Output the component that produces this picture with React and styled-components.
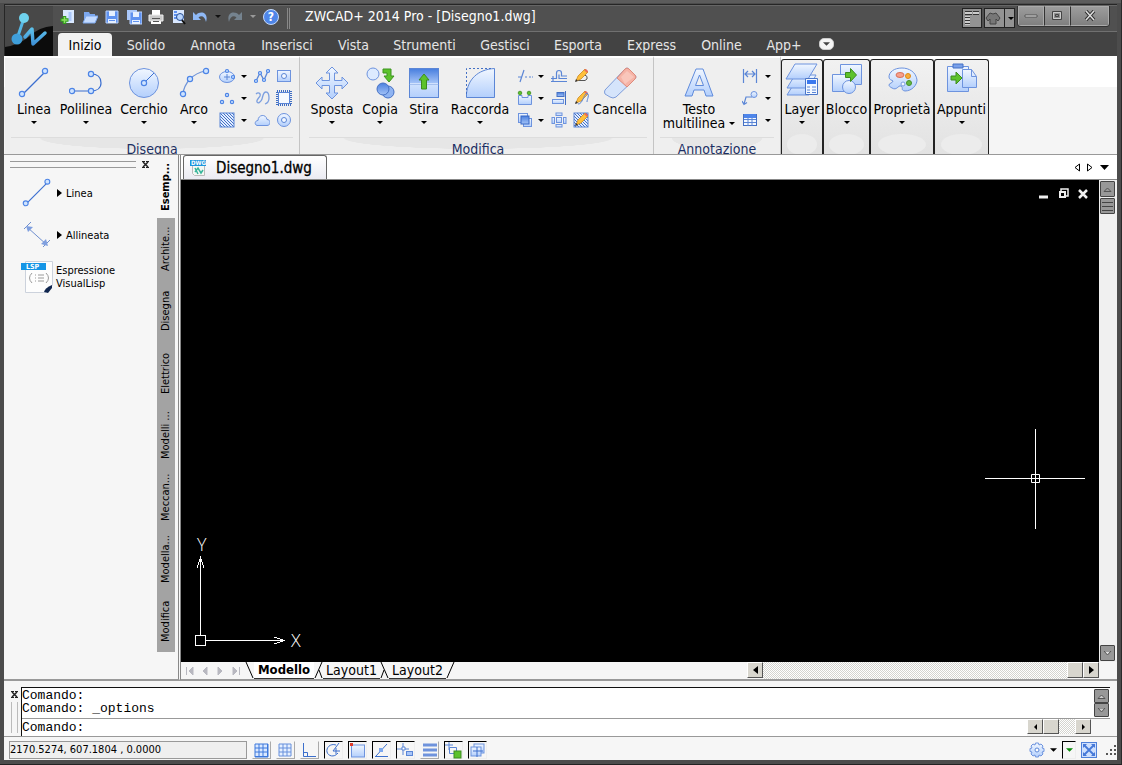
import React from "react";
import styled, { createGlobalStyle, css } from "styled-components";

const GlobalStyle = createGlobalStyle`
  * { box-sizing: border-box; }
  body {
    margin: 0;
    background: #3a3a3a;
    color: #000;
    font-family: "DejaVu Sans Condensed", "Noto Sans", sans-serif;
    font-size: 14px;
  }
  button, input, textarea {
    font-family: inherit;
    color: inherit;
    margin: 0;
    padding: 0;
    border: 0;
    border-radius: 0;
    background: none;
    outline: none;
  }
  svg { display: block; flex: none; }
`;

const BLUE = "#5b86d6";
const glass = { fill: "url(#glass)", stroke: "#6d93de" };

function Node({ x, y, r = 2.6 }) {
  return <circle cx={x} cy={y} r={r} fill="#cfe4ff" stroke="#4c84e6" strokeWidth="1.2" />;
}

function Svg({ w = 16, h, vb, children, ...rest }) {
  return (
    <svg width={w} height={h || w} viewBox={vb || `0 0 ${w} ${h || w}`} fill="none" aria-hidden="true" {...rest}>
      {children}
    </svg>
  );
}

function Caret({ color = "#000", w = 6 }) {
  return (
    <Svg w={w} h={w > 6 ? 4 : 3} vb="0 0 6 3">
      <path d="M0 0h6L3 3z" fill={color} />
    </Svg>
  );
}

/* ---------- large ribbon icons, 34 x 34 ---------- */

const bigIcons = {
  linea: (
    <>
      <path d="M5 29 28 6" stroke="#3b6fd0" strokeWidth="1.2" />
      <Node x={28} y={5} />
      <Node x={5} y={28} />
    </>
  ),
  polilinea: (
    <>
      <path d="M3 25h19M22 8c7 0 10 4 10 9s-4 8-10 8" stroke="#3b6fd0" strokeWidth="1.2" />
      <Node x={22} y={8} />
      <Node x={3} y={25} />
      <Node x={22} y={25} />
    </>
  ),
  cerchio: (
    <>
      <circle cx="17" cy="17" r="14.5" {...glass} />
      <path d="M17 17 27 7" stroke="#3b6fd0" />
      <Node x={17} y={17} />
    </>
  ),
  arco: (
    <>
      <path d="M6 28C7 18 15 7 29 5" stroke="#6e93d8" strokeWidth="1.2" />
      <Node x={29} y={5} />
      <Node x={13} y={13} />
      <Node x={6} y={28} />
    </>
  ),
  sposta: (
    <path
      d="M17 1l6 6h-3.500v7.500H27V11l6 6-6 6v-3.500h-7.500V27H23l-6 6-6-6h3.500v-7.500H7V23l-6-6 6-6v3.500h7.500V7H11z"
      {...glass}
    />
  ),
  copia: (
    <>
      <circle cx="10" cy="8" r="6" {...glass} fill="#dceaff" />
      <path d="M20 3h8v7h3l-5 6-5-6h3V7h-4z" fill="#5cc22c" stroke="#3d9420" />
      <circle cx="25" cy="26" r="6" fill="#8fb4f2" stroke="#4470c4" />
      <circle cx="20" cy="23" r="6" fill="url(#deep)" stroke="#4470c4" />
    </>
  ),
  stira: (
    <>
      <rect x="2.500" y="2.500" width="29" height="29" fill="url(#glass)" stroke="#5b86d6" />
      <rect x="3" y="3" width="28" height="14" fill="url(#deep)" />
      <path d="M2.500 18.500h29" stroke="#7da0e0" strokeDasharray="1 1" />
      <path d="M17 8l5 6h-2.500v9h-5v-9H12z" fill="#5cc22c" stroke="#3d8c20" />
    </>
  ),
  raccorda: (
    <>
      <path d="M3.500 31.500V30C4 15 15 3 31.500 2.500v29z" fill="url(#glass)" />
      <path d="M3.500 31.500v-4C5 14 14 3.500 31.500 2.500v29z" stroke="#5b86d6" />
      <path d="M3.500 28V2.500H28" stroke="#4470c4" strokeDasharray="2 2" />
    </>
  ),
  cancella: (
    <>
      <path d="M2 24 22 3q2-2 4 0l6 6q2 2 0 4L13 31q-3 2-6 0l-5-3q-1-2 0-4z" fill="#d5e4fb" stroke="#7f9edb" />
      <path d="M14 12 22 3q2-2 4 0l6 6q2 2 0 4l-8 8z" fill="#f6b3a6" stroke="#dd8b7c" />
      <path d="M18 11l6-6 7 6-9 7z" fill="#fbcec5" opacity=".7" />
    </>
  ),
  testo: (
    <path
      d="M14 3h7l10 27h-7l-2-6H12l-2 6H3zM17.500 9 13.500 19.500h8z"
      fill="url(#glass)"
      stroke="#5f8bdc"
      fillRule="evenodd"
    />
  ),
  layer: (
    <>
      <path d="M10 19 2 32h22l7-13z" {...glass} />
      <path d="M10 12 2 25h22l7-13z" {...glass} />
      <path d="M10 1 1 16h22l9-15z" {...glass} />
      <path d="M20.500 15.500h12v16h-12z" fill="#f3f8ff" stroke="#4b76c8" />
      <path d="M22 17h9v4h-9z" fill="#3a78ee" />
      <path d="M22 24h3M27 24h4M22 27h3M27 27h4M22 29.500h3M27 29.500h4" stroke="#5b86d6" />
    </>
  ),
  blocco: (
    <>
      <path d="M10.500 1.500h21v20h-21z" {...glass} />
      <path d="M2.500 11.500h18v17h-18z" {...glass} />
      <circle cx="19" cy="24" r="6.500" {...glass} />
      <path d="M15.500 9.500h5v-4l6 6.500-6 6.500v-4h-5z" fill="#5cc22c" stroke="#3d8c20" />
    </>
  ),
  proprieta: (
    <>
      <path d="M7 25c5 3 6-3 9-2 3 2-1 4 4 5 7 0 12-6 12-11C31 9 24 5 17 5 9 5 4 9 4 14c0 3 3 3 4 4 0 2-4 2-4 4 0 1 1 2 3 3z" {...glass} />
      <ellipse cx="15" cy="12" rx="4" ry="2.500" fill="#f7a08c" stroke="#d97058" />
      <circle cx="23" cy="13" r="2.500" fill="#f8ad3a" stroke="#dd8a18" />
      <circle cx="24" cy="20" r="2.500" fill="#66b840" stroke="#43902a" />
      <circle cx="18" cy="21" r="2" fill="#f3f8ff" stroke="#7c9ee0" />
    </>
  ),
  appunti: (
    <>
      <path d="M2.500 3.500h21v25h-21z" {...glass} />
      <path d="M8 1h10v4H8z" fill="#79a0ea" stroke="#4470c4" />
      <path d="M17.500 6.500h9l5 7v11h-14z" {...glass} />
      <path d="M26.500 6.500v7h5" stroke="#6d93de" />
      <path d="M6 13h5V9l6 6-6 6v-4H6z" fill="#5cc22c" stroke="#3d8c20" />
    </>
  ),
};

/* ---------- small ribbon icons, 16 x 16 ---------- */

const pencil = (
  <>
    <path d="M3 13 5 8l7-7 3 3-7 7z" fill="#ffbf3a" stroke="#c98a24" strokeWidth=".8" />
    <path d="M11 2l2-1 2 2-1 2z" fill="#ea6a5c" />
    <path d="M2 14l1-3 2 2z" fill="#333" />
  </>
);

const smallIcons = {
  ellisse: (
    <>
      <ellipse cx="8" cy="9" rx="7.500" ry="5.500" {...glass} />
      <path d="M8 6v6M5 9h6" stroke={BLUE} />
      <Node x={8} y={3} r={1.500} />
      <Node x={14} y={9} r={1.500} />
    </>
  ),
  punti: (
    <>
      <Node x={8} y={5} r={1.600} />
      <Node x={3} y={12} r={1.600} />
      <Node x={13} y={12} r={1.600} />
    </>
  ),
  tratteggio: <rect x="1" y="1" width="14" height="14" fill="url(#hatch)" stroke={BLUE} />,
  spline: (
    <>
      <path d="M2 13 6 5l4 7 4-9" stroke={BLUE} strokeWidth="1.300" />
      <Node x={2} y={13} r={1.500} />
      <Node x={6} y={5} r={1.500} />
      <Node x={10} y={12} r={1.500} />
      <Node x={14} y={3} r={1.500} />
    </>
  ),
  mano: <path d="M2 4c2-2 5-1 4 2-1 2-4 4-3 6s4 0 5-3 1-7 4-7 3 3 3 6-1 5-4 6" stroke="#7c9fdf" strokeWidth="1.300" />,
  nuvola: <path d="M3 13.500c-3-1-2-5 1-5 0-6 8-7 9-1 4 0 4 6 0 6z" {...glass} />,
  regione: (
    <>
      <rect x="1.500" y="2.500" width="13" height="11" {...glass} />
      <circle cx="8" cy="8" r="2.500" fill="#f3f8ff" stroke={BLUE} />
    </>
  ),
  nascondi: (
    <>
      <rect x="1" y="1" width="14" height="14" stroke="#3f6dc2" strokeWidth="2" strokeDasharray="1 1" />
      <rect x="2.500" y="2.500" width="11" height="11" fill="#f6faff" stroke={BLUE} />
    </>
  ),
  anello: (
    <>
      <circle cx="8" cy="8" r="6.500" {...glass} />
      <circle cx="8" cy="8" r="2.500" fill="#f3f8ff" stroke={BLUE} />
    </>
  ),
  taglia: <path d="M1 9h4M3 14 7 2M8 9h2M12 9h2M15 9h1" stroke={BLUE} strokeWidth="1.200" />,
  unisci: (
    <>
      <path d="M1.500 5.500H5v2h6v-2h3.500v9h-13z" {...glass} />
      <circle cx="3" cy="3" r="1.800" fill="#5cc22c" stroke="#3d8c20" strokeWidth=".8" />
      <circle cx="12" cy="3" r="1.800" fill="#5cc22c" stroke="#3d8c20" strokeWidth=".8" />
    </>
  ),
  ordine: (
    <>
      <rect x="1.500" y="1.500" width="9" height="9" {...glass} />
      <rect x="6.500" y="6.500" width="8" height="8" {...glass} />
      <rect x="4" y="4" width="8" height="8" fill="url(#deep)" stroke="#3767c4" />
    </>
  ),
  offset: (
    <path
      d="M0 13.500h16M0 10.500h5.500V5q0-2.500 2.500-2.500T10.500 5v3H16M2 13V8M8 11V6.500M8 10.500h8"
      stroke={BLUE}
      strokeWidth="1.200"
    />
  ),
  allinea: (
    <>
      <path d="M14.500 1v14" stroke="#4470c4" />
      <rect x="6" y="2.500" width="7" height="4" fill="url(#deep)" stroke="#4470c4" />
      <rect x="1.500" y="9.500" width="11" height="4" {...glass} />
    </>
  ),
  serie: (
    <>
      <rect x="5.500" y="5.500" width="5" height="5" {...glass} />
      <rect x="1" y="5.500" width="2.500" height="6" {...glass} />
      <rect x="12.500" y="5.500" width="2.500" height="6" {...glass} />
      <rect x="5" y="1" width="6" height="2.500" {...glass} />
      <rect x="5" y="12.500" width="6" height="2.500" {...glass} />
    </>
  ),
  editPoli: (
    <>
      <path d="M5 12.500h7q3-1 2-4l-3-2" stroke="#555" />
      {pencil}
    </>
  ),
  editSpline: (
    <>
      {pencil}
      <path d="M5 14c5 0 5-9 9-11 3 2 0 6 0 9" stroke={BLUE} />
    </>
  ),
  editTratt: (
    <>
      <rect x="1" y="1" width="14" height="14" fill="url(#hatch)" stroke={BLUE} />
      {pencil}
    </>
  ),
  quota: <path d="M1.500 1v14M14.500 1v14M3 6h10M6 3 3 6l3 3M10 3l3 3-3 3" stroke={BLUE} strokeWidth="1.200" />,
  direttrice: (
    <>
      <path d="M2 14 4 7h6M0 11l2 3.500 3-2" stroke={BLUE} strokeWidth="1.200" />
      <circle cx="12" cy="4.500" r="3" {...glass} />
    </>
  ),
  tabella: (
    <>
      <rect x="1.500" y="2.500" width="13" height="11" fill="#f3f8ff" stroke="#4470c4" />
      <rect x="2" y="2" width="12" height="4" fill="#4f86ea" />
      <path d="M2 7.500h12M2 10.500h12M6 6v8M10 6v8" stroke={BLUE} />
    </>
  ),
};

/* ---------- quick access icons ---------- */

const disk = (
  <>
    <path d="M2 2h12v12H2z" fill="#5f92f0" stroke="#b8d0fa" />
    <path d="M5 2h6v5H5zM4 10h8v4H4z" fill="#e6f0ff" />
    <path d="M5 11.500h6" stroke="#5f92f0" />
  </>
);

const quickIcons = {
  Nuovo: (
    <>
      <path d="M3 1h11v13H3z" fill="#d9e8ff" />
      <path d="M10 3v9" stroke="#a9c6f8" strokeWidth="3" />
      <path d="M4.500 7v8M.5 11h8" stroke="#2f9a1c" strokeWidth="3.500" />
      <path d="M4.500 8v6M1.500 11h6" stroke="#8de060" strokeWidth="1.500" />
    </>
  ),
  Apri: (
    <>
      <path d="M2 14V3h5l1 2h5v9z" fill="#7ca8ef" />
      <path d="M1 14 4 7h12l-3 7z" fill="#c4dbff" stroke="#7ca8ef" />
    </>
  ),
  Salva: disk,
  "Salva con nome": (
    <>
      <path d="M1 1h10v10H1z" fill="#a9c8fb" />
      <g transform="translate(2 1)">{disk}</g>
    </>
  ),
  Stampa: (
    <>
      <path d="M4 1h8v5H4zM3 10h10v5H3z" fill="#fff" />
      <path d="M1 6h14v6H1z" fill="#c9c9c9" stroke="#eee" />
      <path d="M4 9.500h8M5 12.500h6" stroke="#555" />
    </>
  ),
  Anteprima: (
    <>
      <path d="M3 1h11v13H3z" fill="#d9e8ff" />
      <path d="M4 3h3M4 6h3M4 9h3" stroke="#5f92f0" strokeWidth="2" />
      <circle cx="10" cy="8" r="3.500" fill="#b9d6ff" stroke="#264c91" />
      <path d="m12 11 3 4" stroke="#111" strokeWidth="2" />
    </>
  ),
};

const quickOrder = ["Nuovo", "Apri", "Salva", "Salva con nome", "Stampa", "Anteprima"];

function Undo({ color, flip }) {
  return (
    <Svg w={16}>
      <path
        d="M1 3v8h8L6.500 8.500C9 6 13 7 14 13 17 4 9 1 4 6z"
        fill={color}
        transform={flip ? "matrix(-1 0 0 1 16 0)" : undefined}
      />
    </Svg>
  );
}

/* ---------- data ---------- */

const menuTabs = [
  ["Inizio", 54], ["Solido", 64], ["Annota", 70], ["Inserisci", 78], ["Vista", 55], ["Strumenti", 87],
  ["Gestisci", 74], ["Esporta", 72], ["Express", 75], ["Online", 65], ["App+", 60],
];

const paletteTabs = ["Archite...", "Disegna", "Elettrico", "Modelli ...", "Meccan...", "Modella...", "Modifica"];

const collapsed = [
  ["Layer", "layer", 42], ["Blocco", "blocco", 47], ["Proprietà", "proprieta", 64], ["Appunti", "appunti", 55],
];

const statusIcons = [
  ["Snap", false, <path key="a" d="M2 2h13v13H2zM2 6h13M2 10h13M6 2v13M10 2v13M14.500 2v13M2 14.500h13" stroke="#3c78dc" fill="#dbe9ff" />],
  ["Griglia", false, <path key="b" d="M2 2h12v12H2zM2 6h12M2 10h12M6 2v12M10 2v12" stroke="#6690dc" fill="#e6f0ff" />],
  ["Orto", false, <path key="c" d="M2.500 1v13.500H15M2.500 10.500h4v4" stroke="#3c6fcc" />],
  ["Polare", true, <path key="d" d="M8 9h7M8 9l6-8M11 3C5 1 1 6 2 10s7 6 11 1M11 6v6" stroke="#3c6fcc" />],
  ["Osnap", true, <g key="e"><rect x="2.500" y="3" width="13" height="12" {...glass} /><path d="M1 1h3v3H1z" fill="#e03c2c" /></g>],
  ["Otrack", true, <g key="f"><path d="M2 14.500h13M3 14 14 2" stroke="#3c6fcc" /><path d="M6 6h4v4H6z" fill="#7ca8ef" /></g>],
  ["Dinamico", true, <g key="g"><path d="M6 1v12M0 7h12" stroke="#5b86d6" /><path d="M5 5h3v3H5z" fill="#fff" stroke={BLUE} /><rect x="9.500" y="9.500" width="6" height="4" fill="#a9c6f8" stroke={BLUE} /></g>],
  ["Spessore", false, <path key="h" d="M2 3h14M2 8h14M2 13h14" stroke="#6f93dc" strokeWidth="3" />],
  ["Ciclo", true, <g key="i"><path d="M4 0v8M0 3h8M4.500 5.500h7v6h-7z" stroke={BLUE} /><rect x="9" y="9" width="7" height="7" fill="#5cc22c" stroke="#3d8c20" /></g>],
  ["Modello", true, <g key="j"><rect x="5" y="2" width="10" height="9" {...glass} /><rect x="2" y="5" width="10" height="9" {...glass} /><path d="M4 9h10M8 5v10" stroke="#3c6fcc" /></g>],
];

/* ---------- app ---------- */

function BigButton({ icon, label, w, caret = true }) {
  return (
    <Big $w={w}>
      <Svg w={34}>{bigIcons[icon]}</Svg>
      <span>{label}</span>
      {caret && <Caret />}
    </Big>
  );
}

function SmallTools({ columns, items }) {
  return (
    <SmallGrid $columns={columns}>
      {items.map((item, i) => (
        <button key={i} type="button" aria-label={item === "v" ? "Altro" : item}>
          {item === "v" ? <Caret /> : <Svg w={16}>{smallIcons[item]}</Svg>}
        </button>
      ))}
    </SmallGrid>
  );
}

function App() {
  return (
    <Frame>
      <GlobalStyle />
      <Header>
        <Logo type="button" aria-label="Menu applicazione">
          <Svg w={48} h={49}>
            <defs>
              <linearGradient id="glass" x1="0" y1="0" x2="0" y2="1">
                <stop offset="0" stopColor="#f1f7ff" />
                <stop offset="1" stopColor="#b3cffc" />
              </linearGradient>
              <linearGradient id="deep" x1="0" y1="0" x2="0" y2="1">
                <stop offset="0" stopColor="#4a80df" />
                <stop offset="1" stopColor="#a4c3f7" />
              </linearGradient>
              <linearGradient id="logo" x1="0" y1="0" x2="0" y2="1">
                <stop offset="0" stopColor="#5cc0ea" />
                <stop offset="1" stopColor="#3f92d8" />
              </linearGradient>
              <pattern id="hatch" width="3" height="3" patternUnits="userSpaceOnUse">
                <rect width="3" height="3" fill="#e2edff" />
                <path d="M0 0l3 3" stroke="#4470c4" />
              </pattern>
            </defs>
            <path d="M0 0h48v19Q34 20 25 29 14 38 0 40z" fill="#484848" />
            <path d="M48 19Q34 20 25 29 14 38 0 40v9h48z" fill="#0c0c0c" />
            <path d="M19 11 12 32" stroke="#55b6e4" strokeWidth="3" />
            <circle cx="19" cy="11" r="5" fill="#6fd2ee" />
            <circle cx="12" cy="32" r="5.500" fill="#3f9fdb" />
            <path d="M20 30 27 22 28 37 40 26" stroke="url(#logo)" strokeWidth="3.500" strokeLinecap="round" strokeLinejoin="round" />
          </Svg>
        </Logo>
        <HeaderRows>
          <TitleBar>
            <QuickAccess>
              {quickOrder.map((name) => (
                <button key={name} type="button" aria-label={name}>
                  <Svg w={16}>{quickIcons[name]}</Svg>
                </button>
              ))}
              <button type="button" aria-label="Annulla"><Undo color="#8fb9f6" /></button>
              <SlimButton type="button" aria-label="Elenco annulla"><Caret color="#111" /></SlimButton>
              <button type="button" aria-label="Ripeti"><Undo color="#75838f" flip /></button>
              <SlimButton type="button" aria-label="Elenco ripeti"><Caret color="#999" /></SlimButton>
              <HelpButton type="button">?</HelpButton>
            </QuickAccess>
            <Title>ZWCAD+ 2014 Pro - [Disegno1.dwg]</Title>
            <StyleButton type="button" aria-label="Interfaccia" $w={20}>
              <Svg w={16}>
                <path d="M1 1.500h7v3H1zM9 1.500h6v3H9zM1 6h5v9H1z" fill="#ccc" />
                <path d="M1 1.500h7M9 1.500h6M1 4.500h7M9 4.500h6M1 7.500h5M1 10.500h5M1 13.500h5" stroke="#333" />
              </Svg>
            </StyleButton>
            <StyleButton type="button" aria-label="Stile" $w={31}>
              <Svg w={16}>
                <path d="M5 3q3 2 6 0l4 5-2 3-2-2v5H5V9l-2 2-2-3z" fill="#777" stroke="#444" />
              </Svg>
              <i />
              <Caret />
            </StyleButton>
            <WindowButtons>
              <WinButton type="button" aria-label="Riduci" $w={26}>
                <Svg w={14}><path d="M1 6h12v2H1z" fill="#ddd" stroke="#444" strokeWidth=".8" /></Svg>
              </WinButton>
              <WinButton type="button" aria-label="Ingrandisci" $w={26}>
                <Svg w={12}><path d="M1.500 1.500h9v8h-9zM4.500 4.500h3v2h-3z" stroke="#444" /><path d="M2.500 2.500h7v6h-7z" stroke="#ccc" /></Svg>
              </WinButton>
              <WinButton type="button" aria-label="Chiudi" $w={39}>
                <Svg w={12}><path d="m2 1 8 9M10 1l-8 9" stroke="#333" strokeWidth="3.500" /><path d="m2 1 8 9M10 1l-8 9" stroke="#ddd" strokeWidth="1.500" /></Svg>
              </WinButton>
            </WindowButtons>
          </TitleBar>
          <MenuBar>
            {menuTabs.map(([name, w], i) => (
              <MenuTab key={name} type="button" $w={w} $active={i === 0}>{name}</MenuTab>
            ))}
            <Collapse type="button" aria-label="Riduci barra"><Caret color="#444" w={7} /></Collapse>
          </MenuBar>
        </HeaderRows>
      </Header>

      <Ribbon>
        <Group>
          <Tools>
            <BigButton icon="linea" label="Linea" w={46} />
            <BigButton icon="polilinea" label="Polilinea" w={58} />
            <BigButton icon="cerchio" label="Cerchio" w={58} />
            <BigButton icon="arco" label="Arco" w={42} />
            <SmallTools
              columns="24px 10px 26px 18px"
              items={["ellisse", "v", "spline", "regione", "punti", "v", "mano", "nascondi", "tratteggio", "v", "nuvola", "anello"]}
            />
          </Tools>
          <GroupLabel>Disegna</GroupLabel>
        </Group>
        <Group $wide>
          <Tools>
            <BigButton icon="sposta" label="Sposta" w={46} />
            <BigButton icon="copia" label="Copia" w={50} />
            <BigButton icon="stira" label="Stira" w={38} />
            <BigButton icon="raccorda" label="Raccorda" w={74} />
            <SmallTools
              columns="16px 16px 20px 24px"
              items={["taglia", "v", "offset", "editPoli", "unisci", "v", "allinea", "editSpline", "ordine", "v", "serie", "editTratt"]}
            />
            <BigButton icon="cancella" label="Cancella" w={54} caret={false} />
          </Tools>
          <GroupLabel>Modifica</GroupLabel>
        </Group>
        <Group>
          <Tools>
            <Big $w={78}>
              <Svg w={34}>{bigIcons.testo}</Svg>
              <span>Testo</span>
              <TextLine>multilinea <Caret /></TextLine>
            </Big>
            <SmallTools columns="24px 12px" items={["quota", "v", "direttrice", "v", "tabella", "v"]} />
          </Tools>
          <GroupLabel>Annotazione</GroupLabel>
        </Group>
        {collapsed.map(([label, icon, w]) => (
          <Folded key={label} type="button" $w={w}>
            <Svg w={34}>{bigIcons[icon]}</Svg>
            <span>{label}</span>
            <Caret />
            <i />
          </Folded>
        ))}
      </Ribbon>

      <Workspace>
        <Palette>
          <PaletteBody>
            <Grip><i /><button type="button" aria-label="Chiudi tavolozza"><CrossIcon /></button></Grip>
            <Tool type="button">
              <Svg w={32} vb="0 0 34 34">{bigIcons.linea}</Svg>
              <Svg w={5} h={8}><path d="M0 0v8l5-4z" fill="#000" /></Svg>
              Linea
            </Tool>
            <Tool type="button">
              <Svg w={32}>
                <path d="M6 8 26 26M3 10 10 3M22 28l7-7" stroke="#6f8fcf" />
                <path d="m5 7 7 1-5 5zM27 27l-2-7-5 5z" fill="#7f9fdf" />
              </Svg>
              <Svg w={5} h={8}><path d="M0 0v8l5-4z" fill="#000" /></Svg>
              Allineata
            </Tool>
            <Tool type="button" $tight>
              <Svg w={32}>
                <path d="M4.500.5h27v24l-7 7h-20z" fill="#fdfdfd" stroke="#ccd2dc" />
                <path d="M0 2h25v7H0z" fill="#1595e6" />
                <text x="5" y="8" fontSize="7" fontWeight="bold" fill="#fff">LSP</text>
                <path d="M11 12q-5 5 0 10M25 12q5 5 0 10M14 14h1M14 17h1M14 20h1M17 14h6M17 17h6M17 20h6" stroke="#9a9a9a" />
                <path d="M23 31q1-4 8-7v3l-4 5z" fill="#10264f" />
              </Svg>
              <span>Espressione<br />VisualLisp</span>
            </Tool>
          </PaletteBody>
          <SideTabs>
            <SideTab type="button" $active>Esemp...</SideTab>
            {paletteTabs.map((t) => <SideTab key={t} type="button">{t}</SideTab>)}
          </SideTabs>
        </Palette>

        <Document>
          <DocTabs>
            <DocTab type="button">
              <Svg w={16}>
                <path d="M2.500 3.500h12v12h-10l-2-2z" fill="#f4f8f4" stroke="#bbb" />
                <path d="M0 0h16v6H0z" fill="#1c95dd" />
                <text x="1" y="5" fontSize="6" fontWeight="bold" fill="#fff">DWG</text>
                <path d="m5 12 3-4 3 5 2-3M5 8l3 6" stroke="#37b59b" strokeWidth="1.500" />
              </Svg>
              Disegno1.dwg
            </DocTab>
            <TabNav>
              <button type="button" aria-label="Precedente"><Svg w={6} h={9}><path d="M5.500 1v7L1 4.500z" stroke="#000" /></Svg></button>
              <button type="button" aria-label="Successivo"><Svg w={6} h={9}><path d="M.5 1v7L5 4.500z" stroke="#000" /></Svg></button>
              <button type="button" aria-label="Elenco disegni"><Svg w={9} h={5}><path d="M0 0h9L4.500 5z" fill="#000" /></Svg></button>
            </TabNav>
          </DocTabs>
          <ViewRow>
            <View>
              <ViewControls>
                <button type="button" aria-label="Riduci disegno"><Svg w={11}><path d="M1 9h9" stroke="#eee" strokeWidth="3" /></Svg></button>
                <button type="button" aria-label="Ripristina disegno"><Svg w={11}><path d="M3 3V1h7v7H8" stroke="#eee" strokeWidth="1.500" /><path d="M2 4h5v5H2z" stroke="#eee" strokeWidth="2" /></Svg></button>
                <button type="button" aria-label="Chiudi disegno"><Svg w={11}><path d="m1 2 8 8M9 2l-8 8" stroke="#eee" strokeWidth="2.500" /></Svg></button>
              </ViewControls>
              <Ucs w={124} h={126} vb="0 -10 124 126" shapeRendering="crispEdges">
                <path d="M3.500 99.500h10v10h-10zM8.500 99V23M14 104.500h78" stroke="#fff" />
                <path d="M5 32l3.500-10L12 32M82 101l10 3.500-10 3.500" stroke="#fff" />
                <text x="5" y="15">Y</text>
                <text x="99" y="111">X</text>
              </Ucs>
              <Cross w={100} h={100}>
                <path d="M50.500 0v100M0 49.500h100M46.500 45.500h8v8h-8z" stroke="#fff" />
              </Cross>
            </View>
            <VScroll>
              <MiniButton type="button" aria-label="Su"><Svg w={9} h={5}><path d="M1 4.500h7L4.500 1z" fill="#999" stroke="#555" /></Svg></MiniButton>
              <MiniButton type="button" aria-label="Cursore verticale"><Svg w={11} h={10}><path d="M0 1.500h11M0 5.500h11M0 9.500h11" stroke="#444" /></Svg></MiniButton>
              <s />
              <MiniButton type="button" aria-label="Giù"><Svg w={9} h={5}><path d="M1 0h7L4.500 4z" fill="#ddd" stroke="#555" /></Svg></MiniButton>
            </VScroll>
          </ViewRow>
          <LayoutBar>
            <Steps>
              {["M1.500 1v8M8 1v8L4 5z", "M7 1v8L3 5z", "M2 1v8l4-4z", "M2 1v8l4-4zM8.500 1v8"].map((d) => (
                <button key={d} type="button" aria-label="Scorri layout"><Svg w={10}><path d={d} fill="#b8b8c0" stroke="#b8b8c0" /></Svg></button>
              ))}
            </Steps>
            <Slash $back />
            <LayoutTab type="button" $active>Modello</LayoutTab>
            <Slash $both />
            <LayoutTab type="button">Layout1</LayoutTab>
            <Slash $both $cross />
            <LayoutTab type="button">Layout2</LayoutTab>
            <Slash />
            <HScroll>
              <ClassicButton type="button" aria-label="Sinistra"><Svg w={5} h={8}><path d="M5 0v8L0 4z" fill="#000" /></Svg></ClassicButton>
              <s />
              <ClassicButton type="button" aria-label="Cursore orizzontale" />
              <ClassicButton type="button" aria-label="Destra"><Svg w={5} h={8}><path d="M0 0v8l5-4z" fill="#000" /></Svg></ClassicButton>
            </HScroll>
          </LayoutBar>
        </Document>
      </Workspace>

      <CommandDock>
        <DockGrip><button type="button" aria-label="Chiudi comandi"><CrossIcon /></button><i /></DockGrip>
        <CommandPane>
          <History>
            <div>Comando:<br />Comando: _options</div>
            <MiniPair>
              <MiniButton type="button" aria-label="Su"><Svg w={9} h={5}><path d="M1 4.500h7L4.500 1z" fill="#ccc" stroke="#555" /></Svg></MiniButton>
              <MiniButton type="button" aria-label="Giù"><Svg w={9} h={5}><path d="M1 0h7L4.500 4z" fill="#ccc" stroke="#555" /></Svg></MiniButton>
            </MiniPair>
          </History>
          <Prompt>
            <label htmlFor="cmd">Comando:</label>
            <input id="cmd" type="text" />
            <PromptScroll>
              <ClassicButton type="button" aria-label="Sinistra"><Svg w={3} h={6}><path d="M3 0v6L0 3z" fill="#000" /></Svg></ClassicButton>
              <ClassicButton type="button" aria-label="Cursore comandi" />
              <s />
              <ClassicButton type="button" aria-label="Destra"><Svg w={3} h={6}><path d="M0 0v6l3-3z" fill="#000" /></Svg></ClassicButton>
            </PromptScroll>
          </Prompt>
        </CommandPane>
      </CommandDock>

      <StatusBar>
        <Coords>2170.5274, 607.1804 , 0.0000</Coords>
        {statusIcons.map(([name, on, icon]) => (
          <Toggle key={name} type="button" aria-label={name} aria-pressed={on} $on={on}>
            <Svg w={17}>{icon}</Svg>
          </Toggle>
        ))}
        <StatusRight>
          <button type="button" aria-label="Impostazioni">
            <Svg w={16}>
              <path d="M6.500 1h3l.5 2 2-1 2 2-1 2 2 .5v3l-2 .5 1 2-2 2-2-1-.5 2h-3L6 13l-2 1-2-2 1-2-2-.5v-3L3 6 2 4l2-2 2 1z" {...glass} />
              <circle cx="8" cy="8" r="2" fill="#fff" stroke={BLUE} />
            </Svg>
          </button>
          <button type="button" aria-label="Elenco impostazioni"><Caret w={7} /></button>
          <Toggle type="button" aria-label="Menu stato" $on $slim><Caret color="#0a8a0a" w={7} /></Toggle>
          <button type="button" aria-label="Schermo intero">
            <Svg w={16}>
              <rect x=".5" y=".5" width="15" height="15" fill="#cfe0fd" stroke="#4f80d8" />
              <path d="m3 3 10 10M13 3 3 13" stroke="#4679d8" strokeWidth="1.800" />
              <path d="M2 2h4L2 6zM14 2h-4l4 4zM2 14h4l-4-4zM14 14h-4l4-4z" fill="#4679d8" />
            </Svg>
          </button>
          <Svg w={11}>
            <path d="M8 0h2v2H8zM8 4h2v2H8zM4 4h2v2H4zM8 8h2v2H8zM4 8h2v2H4zM0 8h2v2H0z" fill="#555" />
          </Svg>
        </StatusRight>
      </StatusBar>
    </Frame>
  );
}

function CrossIcon() {
  return (
    <Svg w={7}>
      <path d="m1 1 5 5M6 1 1 6" stroke="#222" strokeWidth="1.500" />
      <path d="M0 .5h3M4 .5h3M0 6.500h3M4 6.500h3" stroke="#222" />
    </Svg>
  );
}

function Slash({ $back, $both, $cross }) {
  return (
    <Svg w={9} h={17}>
      {($back || $cross) && <path d="m1 0 7 16" stroke="#000" />}
      {!$back && !$cross && <path d="M8 0 1 16" stroke="#000" />}
      {$both && !$cross && <path d="m5 8 3 8" stroke="#000" />}
      {$cross && <path d="M4 8 1 16" stroke="#000" />}
    </Svg>
  );
}

/* ---------- styles ---------- */

const center = css`
  display: flex;
  align-items: center;
  justify-content: center;
`;

const Frame = styled.div`
  min-height: 100vh;
  display: flex;
  flex-direction: column;
  padding: 4px;
  background: linear-gradient(#5c5c5c 0 3px, #4c4c4c 3px);
  border-right: 1px solid #2a2a2a;
  border-bottom: 1px solid #222;
`;

const Header = styled.header`
  display: flex;
  height: 52px;
  background: #434343;
  border-top: 1px solid #262626;
  border-left: 1px solid #262626;
`;

const Logo = styled.button`
  width: 48px;
  overflow: hidden;
  && {
    border-top: 1px solid #666;
  }
`;

const HeaderRows = styled.div`
  flex: 1;
  display: flex;
  flex-direction: column;
  min-width: 0;
`;

const TitleBar = styled.div`
  display: flex;
  height: 27px;
  padding-right: 7px;
  border-top: 1px solid #666;
  border-bottom: 1px solid #707070;
  background: #505050;
  color: #fff;
`;

const QuickAccess = styled.div`
  display: flex;
  align-items: center;
  padding: 0 8px 4px 4px;
  margin: 2px 0;
  border-right: 3px double #888;

  button {
    ${center}
    width: 22px;
  }
`;

const SlimButton = styled.button`
  && {
    width: 13px;
  }
`;

const HelpButton = styled.button`
  && {
    width: 16px;
    height: 16px;
    margin-left: 4px;
    border: 1px solid #c5dafb;
    border-radius: 50%;
    background: #4f86e8;
    color: #fff;
    font-size: 12px;
    font-weight: bold;
    line-height: 12px;
  }
`;

const Title = styled.h1`
  flex: 1;
  margin: 0;
  padding-left: 15px;
  font-size: 14px;
  font-weight: normal;
  line-height: 20px;
  white-space: nowrap;
`;

const StyleButton = styled.button`
  ${center}
  width: ${(p) => p.$w}px;
  height: 20px;
  gap: 3px;
  && {
    margin: 2px 2px 0 0;
    border: 1px solid #222;
    background: #939393;
  }

  i {
    align-self: stretch;
    border-left: 1px solid #222;
  }
`;

const WindowButtons = styled.div`
  display: flex;
  height: 21px;
  border: 1px solid #333;
  border-top: 0;
  border-radius: 0 0 4px 4px;
  overflow: hidden;
`;

const WinButton = styled.button`
  ${center}
  width: ${(p) => p.$w}px;
  && {
    background: linear-gradient(#9c9c9c, #808080);
    border: 1px solid #aaa;
  }
  && + & {
    border-left-color: #333;
  }
`;

const MenuBar = styled.nav`
  flex: 1;
  display: flex;
  align-items: flex-end;
  padding-left: 5px;
`;

const MenuTab = styled.button`
  width: ${(p) => p.$w}px;
  height: 23px;
  font-size: 14px;
  line-height: 23px;
  && {
    padding-top: 1px;
    color: ${(p) => (p.$active ? "#000" : "#e6e6e6")};
    background: ${(p) => (p.$active ? "#f2f2f2" : "none")};
    border-radius: 4px 4px 0 0;
  }
  &&:first-child {
    margin-right: 2px;
  }
`;

const Collapse = styled.button`
  ${center}
  width: 15px;
  height: 12px;
  && {
    margin: 0 0 6px 5px;
    border: 1px solid #ccc;
    border-radius: 5px;
    background: #f5f5f5;
  }
`;

const Ribbon = styled.div`
  display: flex;
  height: 98px;
  padding-left: 1px;
  overflow: hidden;
  background: linear-gradient(#fff 0 31px, #f5f5f5 31px);
`;

const Group = styled.section`
  display: flex;
  flex-direction: column;
  padding: 3px 6px 0 ${(p) => (p.$wide ? 9 : 6)}px;
  background: #efefef;
  border-top: 2px solid #fff;
  border-right: 1px solid #c4c4c4;
`;

const Tools = styled.div`
  display: flex;
  flex: none;
  height: 77px;
  padding-top: 4px;
  border-bottom: 1px solid #ddd;
`;

const iconColumn = css`
  display: flex;
  flex-direction: column;
  align-items: center;
  font-size: 14px;
  line-height: 16px;
  white-space: nowrap;

  span + svg {
    margin-top: 4px;
  }
`;

const Big = styled.button.attrs({ type: "button" })`
  ${iconColumn}
  width: ${(p) => p.$w}px;
  && {
    padding-top: 1px;
  }
  span {
    margin-top: 1px;
  }
`;

const TextLine = styled.b`
  display: flex;
  align-items: center;
  gap: 4px;
  font-weight: normal;
  line-height: 13px;
`;

const SmallGrid = styled.div`
  display: grid;
  grid-template-columns: ${(p) => p.$columns};
  grid-auto-rows: 22px;

  button {
    ${center}
  }
`;

const GroupLabel = styled.div`
  flex: none;
  color: #1c2f63;
  font-size: 14px;
  line-height: 22px;
  text-align: center;
  background: radial-gradient(ellipse 40% 50% at 50% 0, #e6e6e6 98%, #efefef);
`;

const Folded = styled.button`
  ${iconColumn}
  width: ${(p) => p.$w}px;
  height: 96px;
  && {
    margin-top: 3px;
    padding-top: 3px;
    border: 1px solid #222;
    border-bottom: 0;
    border-radius: 3px 3px 0 0;
    background: linear-gradient(#f1f1f1, #e2e2e2);
  }
  span {
    margin-top: 4px;
  }
  i {
    width: 76%;
    height: 24px;
    margin-top: 10px;
    border-radius: 50%;
    background: #ececec;
  }
`;

const Workspace = styled.main`
  flex: 1;
  display: flex;
  background: #f6f6f6;
  border-top: 1px solid #999;
`;

const Palette = styled.aside`
  display: flex;
  width: 177px;
  border-right: 3px double #888;
  border-bottom: 1px solid #999;
`;

const PaletteBody = styled.div`
  flex: 1;
  font-size: 11px;
`;

const Grip = styled.div`
  display: flex;
  align-items: center;
  gap: 6px;
  padding: 6px 8px 0 6px;

  i {
    flex: 1;
    height: 7px;
    border: 1px solid #999;
    border-width: 1px 0;
  }
`;

const Tool = styled.button`
  display: flex;
  align-items: center;
  gap: ${(p) => (p.$tight ? 3 : 4)}px;
  height: 42px;
  font-size: 11px;
  line-height: 13px;
  text-align: left;
  white-space: nowrap;
  && {
    padding-left: 17px;
  }

  ${Grip} + && {
    margin-top: 4px;
  }
`;

const SideTabs = styled.div`
  width: 21px;
`;

const SideTab = styled.button`
  display: block;
  width: 18px;
  height: ${(p) => (p.$active ? 63 : 62)}px;
  font-size: 11px;
  line-height: 18px;
  text-align: center;
  writing-mode: vertical-rl;
  transform: rotate(180deg);
  && {
    background: ${(p) => (p.$active ? "#f6f6f6" : "#a3a3a3")};
    font-weight: ${(p) => (p.$active ? "bold" : "normal")};
  }
`;

const Document = styled.section`
  flex: 1;
  display: flex;
  flex-direction: column;
  min-width: 0;
`;

const DocTabs = styled.div`
  display: flex;
  justify-content: space-between;
  align-items: flex-end;
  height: 25px;
  background: #fff;
  border-bottom: 1px solid #888;
`;

const DocTab = styled.button`
  display: flex;
  align-items: center;
  gap: 10px;
  width: 144px;
  height: 24px;
  font-size: 15px;
  && {
    margin-left: 2px;
    padding-left: 6px;
    border: 1px solid #666;
    border-bottom: 0;
    border-radius: 3px 3px 0 0;
    background: linear-gradient(#fff, #ebebf2);
    -webkit-text-stroke: 0.3px #000;
  }
`;

const TabNav = styled.div`
  ${center}
  align-self: center;
  gap: 7px;
  padding-right: 8px;
`;

const ViewRow = styled.div`
  flex: 1;
  display: flex;
`;

const View = styled.div`
  position: relative;
  flex: 1;
  background: #000;
`;

const ViewControls = styled.div`
  position: absolute;
  top: 8px;
  right: 10px;
  display: flex;
  gap: 9px;
`;

const Ucs = styled(Svg)`
  position: absolute;
  left: 11px;
  bottom: 10px;
  font-family: "Open Sans", sans-serif;
  font-size: 18px;
  font-weight: 300;

  text {
    fill: #fff;
  }
`;

const Cross = styled(Svg)`
  position: absolute;
  right: 14px;
  bottom: 133px;
`;

const VScroll = styled.div`
  display: flex;
  flex-direction: column;
  gap: 1px;
  width: 18px;
  padding: 1px;
  background: #f0f0f0;

  s {
    flex: 1;
  }
`;

const MiniButton = styled.button`
  ${center}
  width: 15px;
  height: 16px;
  && {
    border: 1px solid #444;
    border-radius: 1px;
    background: #989898;
  }
`;

const LayoutBar = styled.div`
  display: flex;
  height: 18px;
  padding-right: 18px;
  border-bottom: 1px solid #999;
`;

const Steps = styled.div`
  display: flex;
  align-items: center;
  justify-content: space-between;
  width: 64px;
  padding: 0 4px;
`;

const LayoutTab = styled.button`
  height: 17px;
  width: ${(p) => (p.$active ? 60 : 57)}px;
  font-size: ${(p) => (p.$active ? 13 : 14)}px;
  line-height: 16px;
  && {
    background: ${(p) => (p.$active ? "#fff" : "#f6f6f6")};
    font-weight: ${(p) => (p.$active ? "bold" : "normal")};
    border-bottom: 1px solid #333;
  }
`;

const checker = css`
  background: repeating-conic-gradient(#d4d4cf 0 25%, #fff 0 50%) 0 0 / 2px 2px;
`;

const HScroll = styled.div`
  display: flex;
  width: 352px;
  margin-left: auto;

  s {
    flex: 1;
    ${checker}
  }
`;

const ClassicButton = styled.button`
  ${center}
  width: 16px;
  height: 16px;
  && {
    border: 1px solid;
    border-color: #fff #555 #555 #fff;
    background: #d8d6ce;
  }
`;

const CommandDock = styled.section`
  display: flex;
  padding: 6px 7px 0 5px;
  border-top: 1px solid #999;
  background: #f6f6f6;
`;

const DockGrip = styled.div`
  display: flex;
  flex-direction: column;
  align-items: center;
  gap: 4px;
  width: 12px;
  padding: 4px 2px 3px 0;

  i {
    flex: 1;
    width: 7px;
    border: 1px solid #bbb;
    border-width: 0 1px;
  }
`;

const CommandPane = styled.div`
  flex: 1;
  font-family: "Liberation Mono", monospace;
  font-size: 13px;
  line-height: 13px;
  background: #fff;
  border-top: 1px solid #111;
  border-left: 1px solid #111;
`;

const History = styled.div`
  display: flex;
  justify-content: space-between;
  height: 31px;
  padding: 1px 1px 0 0;
  border-bottom: 1px solid #999;
`;

const MiniPair = styled.div`
  button {
    height: 14px;
  }
`;

const Prompt = styled.div`
  display: flex;
  height: 17px;

  label {
    line-height: 17px;
  }
  input {
    flex: 1;
    min-width: 0;
  }
`;

const PromptScroll = styled.div`
  display: flex;
  width: 83px;
  background: #f6f6f6;

  button {
    height: 15px;
  }
  s {
    width: 16px;
    height: 15px;
    ${checker}
  }
`;

const StatusBar = styled.footer`
  display: flex;
  align-items: center;
  gap: 5px;
  height: 24px;
  padding: 3px 0 0 5px;
  border-top: 1px solid #999;
  background: #f6f6f6;
`;

const Coords = styled.output`
  width: 238px;
  height: 18px;
  border: 1px solid #999;
  background: #efefef;
  font-size: 11px;
  line-height: 16px;
`;

const Toggle = styled.button`
  ${center}
  width: ${(p) => (p.$slim ? 14 : 19)}px;
  height: 18px;
  && {
    border: 1px solid;
    border-color: ${(p) => (p.$on ? "#000 #eee #eee #000" : "#f6f6f6 #aaa #aaa #f6f6f6")};
  }
`;

const StatusRight = styled.div`
  display: flex;
  align-items: center;
  gap: 5px;
  margin-left: auto;

  & > svg {
    margin-left: 4px;
  }
`;

export default App;
